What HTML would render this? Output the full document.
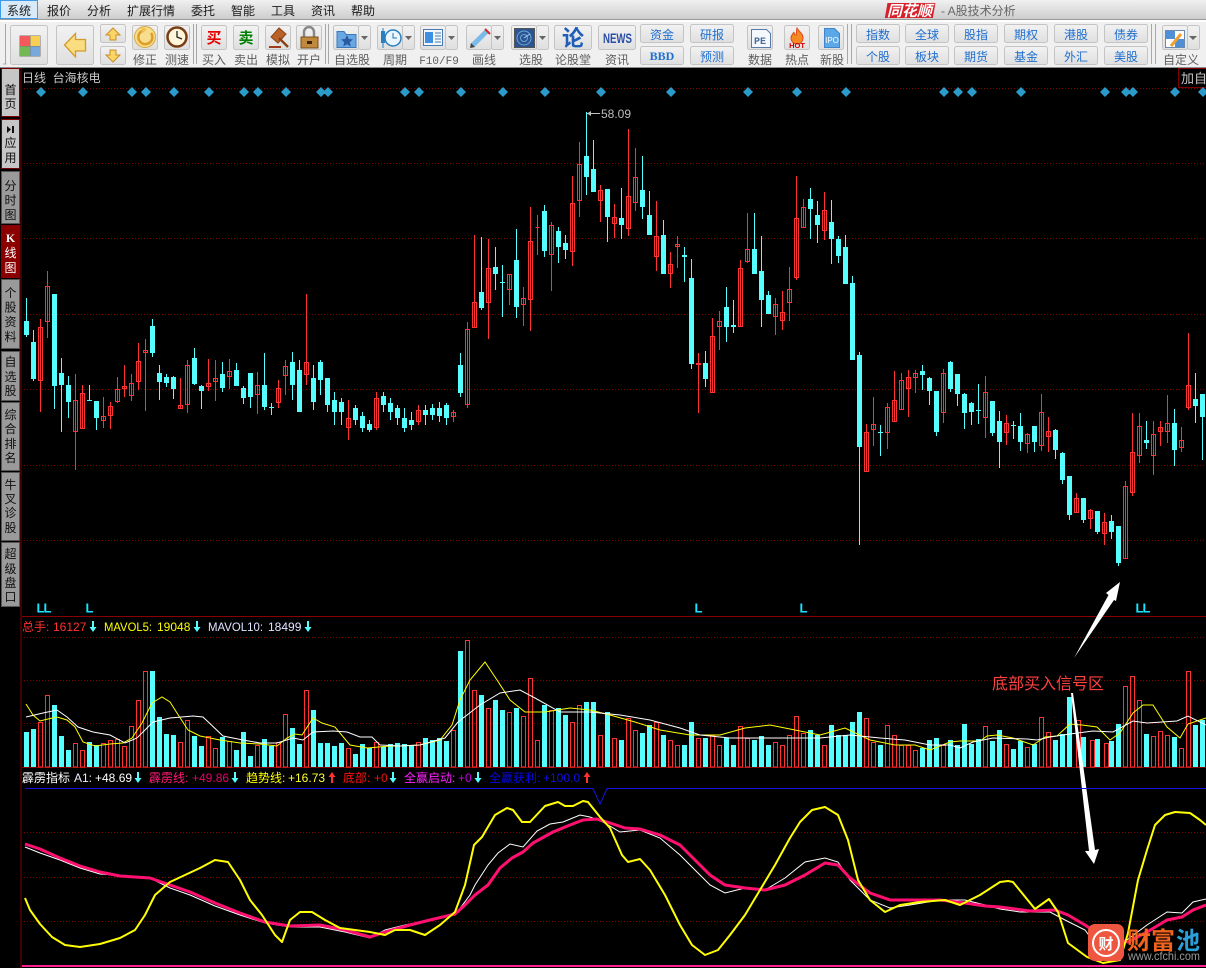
<!DOCTYPE html>
<html lang="zh"><head><meta charset="utf-8"><title>台海核电 日线</title>
<style>
html,body{margin:0;padding:0;background:#000;width:1206px;height:968px;overflow:hidden}
svg{display:block;font-family:"Liberation Sans","Noto Sans CJK SC",sans-serif;font-size:12px}
.b{fill:url(#bg);stroke:#c4c4c4}
.l{fill:#5e5e5e;text-anchor:middle}
.q{fill:#1f6fcf;text-anchor:middle}
.t{fill:#111;text-anchor:middle}
.g{stroke:#7c0000;stroke-dasharray:1 2;fill:none}
.s{fill:none;shape-rendering:crispEdges}
.sep{stroke:#a8a8a8;fill:none}
</style></head><body>
<svg width="1206" height="968" viewBox="0 0 1206 968" xmlns="http://www.w3.org/2000/svg">
<defs>
<linearGradient id="mb" x1="0" y1="0" x2="0" y2="1"><stop offset="0" stop-color="#f1f1f1"/><stop offset="1" stop-color="#cdcdcd"/></linearGradient>
<linearGradient id="bg" x1="0" y1="0" x2="0" y2="1"><stop offset="0" stop-color="#f2f2f2"/><stop offset="1" stop-color="#dfdfdf"/></linearGradient>
<path id="dn" d="M-1 0h2v6h2.500L0 11-3.500 6H-1z"/>
<path id="up" d="M-1 11h2V5h2.500L0 0-3.500 5H-1z"/>
</defs>
<rect width="1206" height="968" fill="#000"/>
<!-- menu -->
<rect width="1206" height="19" fill="url(#mb)"/>
<rect y="19" width="1206" height="1" fill="#9a9a9a"/>
<rect y="20" width="1206" height="2" fill="#fff"/>
<rect y="22" width="1206" height="45" fill="#f0f0f0"/>
<rect y="67" width="1206" height="1" fill="#8c8c8c"/>
<rect x=".5" y=".5" width="37" height="18" fill="#d8e9f8" stroke="#3d9be9"/>
<g fill="#1a1a1a">
<text x="7" y="15">系统</text><text x="47" y="15">报价</text><text x="87" y="15">分析</text><text x="127" y="15">扩展行情</text><text x="191" y="15">委托</text><text x="231" y="15">智能</text><text x="271" y="15">工具</text><text x="311" y="15">资讯</text><text x="351" y="15">帮助</text>
</g>
<g transform="skewX(-10)"><rect x="888" y="3" width="48" height="15" fill="#d8202a"/></g>
<text x="887" y="16" fill="#fff" font-weight="700" font-style="italic" font-size="15">同花顺</text>
<text x="941" y="15" fill="#666">- A股技术分析</text>
<!-- separators -->
<path class="sep" d="M5.500 24V64M6.500 64H3M193.500 24V64M196.500 24V64M325.500 24V64M328.500 24V64M847.500 24V64M851.500 24V64M1151.500 24V64M1155.500 24V64"/>
<!-- buttons -->
<rect class="b" x="10.500" y="25.500" width="37" height="39" rx="2"/>
<rect class="b" x="56.500" y="25.500" width="37" height="39" rx="2"/>
<rect class="b" x="100.500" y="24.500" width="25" height="18" rx="2"/>
<rect class="b" x="100.500" y="46.500" width="25" height="18" rx="2"/>
<rect class="b" x="132.500" y="25.500" width="25" height="24" rx="2"/>
<rect class="b" x="164.500" y="25.500" width="25" height="24" rx="2"/>
<rect class="b" x="201.500" y="25.500" width="25" height="24" rx="2"/>
<rect class="b" x="233.500" y="25.500" width="25" height="24" rx="2"/>
<rect class="b" x="265.500" y="25.500" width="25" height="24" rx="2"/>
<rect class="b" x="296.500" y="25.500" width="25" height="24" rx="2"/>
<rect class="b" x="333.500" y="25.500" width="25" height="24" rx="2"/><rect class="b" x="358.500" y="25.500" width="12" height="24" rx="2"/>
<rect class="b" x="377.500" y="25.500" width="25" height="24" rx="2"/><rect class="b" x="402.500" y="25.500" width="12" height="24" rx="2"/>
<rect class="b" x="420.500" y="25.500" width="25" height="24" rx="2"/><rect class="b" x="445.500" y="25.500" width="12" height="24" rx="2"/>
<rect class="b" x="466.500" y="25.500" width="25" height="24" rx="2"/><rect class="b" x="491.500" y="25.500" width="12" height="24" rx="2"/>
<rect class="b" x="511.500" y="25.500" width="25" height="24" rx="2"/><rect class="b" x="536.500" y="25.500" width="12" height="24" rx="2"/>
<rect class="b" x="554.500" y="25.500" width="37" height="24" rx="2"/>
<rect class="b" x="598.500" y="25.500" width="37" height="24" rx="2"/>
<rect class="b" x="640.500" y="24.500" width="43" height="18" rx="2"/><rect class="b" x="640.500" y="46.500" width="43" height="18" rx="2"/>
<rect class="b" x="690.500" y="24.500" width="43" height="18" rx="2"/><rect class="b" x="690.500" y="46.500" width="43" height="18" rx="2"/>
<rect class="b" x="747.500" y="25.500" width="25" height="24" rx="2"/>
<rect class="b" x="784.500" y="25.500" width="25" height="24" rx="2"/>
<rect class="b" x="818.500" y="25.500" width="25" height="24" rx="2"/>
<rect class="b" x="856.500" y="24.500" width="43" height="18" rx="2"/><rect class="b" x="856.500" y="46.500" width="43" height="18" rx="2"/>
<rect class="b" x="905.500" y="24.500" width="43" height="18" rx="2"/><rect class="b" x="905.500" y="46.500" width="43" height="18" rx="2"/>
<rect class="b" x="954.500" y="24.500" width="43" height="18" rx="2"/><rect class="b" x="954.500" y="46.500" width="43" height="18" rx="2"/>
<rect class="b" x="1004.500" y="24.500" width="43" height="18" rx="2"/><rect class="b" x="1004.500" y="46.500" width="43" height="18" rx="2"/>
<rect class="b" x="1054.500" y="24.500" width="43" height="18" rx="2"/><rect class="b" x="1054.500" y="46.500" width="43" height="18" rx="2"/>
<rect class="b" x="1104.500" y="24.500" width="43" height="18" rx="2"/><rect class="b" x="1104.500" y="46.500" width="43" height="18" rx="2"/>
<rect class="b" x="1162.500" y="25.500" width="25" height="24" rx="2"/><rect class="b" x="1187.500" y="25.500" width="12" height="24" rx="2"/>
<!-- dropdown triangles -->
<path fill="#666" d="M361 36h7l-3.500 4zM405 36h7l-3.500 4zM448 36h7l-3.500 4zM494 36h7l-3.500 4zM539 36h7l-3.500 4zM1189 36h8l-4 4z"/>
<!-- icons -->
<rect x="19.500" y="35.500" width="21" height="21" fill="#777"/>
<rect x="20" y="36" width="10" height="10" fill="#f45a5c"/><rect x="30.500" y="36" width="9.500" height="10" fill="#f8cf52"/><rect x="20" y="46.500" width="10" height="9.500" fill="#73b854"/><rect x="30.500" y="46.500" width="9.500" height="9.500" fill="#79a9dc"/>
<path d="M64.500 45L75.500 33.500V39.500H85.500V51H75.500V57z" fill="#f9dd80" stroke="#d49a2c" stroke-width="1.300"/>
<path d="M113 28l7 7h-4v5h-6v-5h-4z" fill="#fbd666" stroke="#c98f26"/>
<path d="M113 62l7-7h-4v-5h-6v5h-4z" fill="#fbd666" stroke="#c98f26"/>
<circle cx="145" cy="37" r="10.500" fill="#f8dd8c" stroke="#d5a840"/>
<path d="M151 33a7 7 0 1 1-9-2" fill="none" stroke="#dd9d2a" stroke-width="2.500"/><path d="M141 27l6 2-4 4z" fill="#f2c050"/>
<circle cx="177" cy="37" r="9.500" fill="#fff6dc" stroke="#7a3c12" stroke-width="2.500"/><path d="M177 31v6l5 2" fill="none" stroke="#222" stroke-width="1.300"/>
<text x="214" y="43" fill="#e80000" font-weight="700" font-size="15" text-anchor="middle">买</text>
<text x="246" y="43" fill="#008000" font-weight="700" font-size="15" text-anchor="middle">卖</text>
<path d="M271 37l8-9 7 6-8 9z" fill="#b8622a" stroke="#8a4316"/><path d="M279 38l9 9" stroke="#8a4316" stroke-width="2.500"/>
<rect x="269" y="46" width="12" height="2" fill="#a03c1a"/>
<path d="M304 37v-5a5 5 0 0 1 10 0v5" fill="none" stroke="#888" stroke-width="2.500"/>
<rect x="301" y="37" width="17" height="11" fill="#c08a3c" stroke="#7a4e1c"/><rect x="307" y="41" width="5" height="3" fill="#3b2208"/>
<path d="M337 31.500h7l2 3h10v13h-19z" fill="#69a7e4" stroke="#3a78b8"/><path d="M347 35l1.800 4 4.200.4-3.200 2.800 1 4.300-3.800-2.300-3.800 2.300 1-4.300-3.200-2.800 4.200-.4z" fill="#2a5aa0"/>
<rect x="381" y="31" width="4" height="12" fill="#2a7fc0"/><path d="M383 28v20" stroke="#2a7fc0"/><circle cx="393" cy="38" r="8" fill="#eaf5fd" stroke="#2a7fc0" stroke-width="1.500"/><path d="M393 33v5h4" fill="none" stroke="#2a6fa8"/>
<rect x="423.500" y="29.500" width="19" height="16" fill="#f2f7fc" stroke="#4a7ab0"/><rect x="425" y="32" width="8" height="11" fill="#3d8fe0"/><path d="M435 33h6M435 36h6M435 39h6M435 42h6" stroke="#4a7ab0"/>
<path d="M472 46l15-15" stroke="#7cbbe8" stroke-width="5"/><path d="M485 29l5 5" stroke="#d02a2a" stroke-width="2"/><path d="M470 48l1-5 4 4z" fill="#444"/>
<rect x="514.500" y="28.500" width="20" height="19" fill="#2a5590" stroke="#555"/><circle cx="524" cy="38" r="7" fill="none" stroke="#6fa4d8"/><circle cx="524" cy="38" r="3.500" fill="none" stroke="#6fa4d8"/><path d="M524 38l6-4" stroke="#a8d0f0"/>
<text x="573" y="46" fill="#1f5fb8" font-weight="700" font-size="22" text-anchor="middle">论</text>
<text x="603" y="43" fill="#2a4fa8" font-weight="700" font-size="14" textLength="29" lengthAdjust="spacingAndGlyphs">NEWS</text>
<path d="M751.500 29.500h15l4 4v14h-19z" fill="#f4f8fc" stroke="#5a7aa8"/><text x="760" y="44" fill="#4a6a9a" font-weight="700" font-size="10" text-anchor="middle" style="font-family:'Liberation Mono',monospace">PE</text>
<path d="M797 28c2 4 6 5 6 10a6 6 0 0 1-12 0c0-3 2-4 3-6 0 2 1 3 2 3 1-2 0-4 1-7z" fill="#f58a24" stroke="#e04a1a"/><text x="797" y="48" fill="#c00" font-weight="700" font-size="7.500" text-anchor="middle">HOT</text>
<path d="M824.500 28.500h10l5 5v14h-15z" fill="#5aa8e8" stroke="#3f86c8"/><text x="832" y="43" fill="#fff" font-size="8" text-anchor="middle">IPO</text>
<rect x="1165.500" y="30.500" width="19" height="17" fill="#fff" stroke="#6a8ab0"/><rect x="1166" y="31" width="9" height="8" fill="#4f8fd8"/><rect x="1175" y="39" width="9" height="8" fill="#4f8fd8"/><path d="M1171 46l10-12" stroke="#f0a030" stroke-width="3"/>
<!-- labels -->
<g class="l">
<text x="145" y="64">修正</text><text x="177" y="64">测速</text><text x="214" y="64">买入</text><text x="246" y="64">卖出</text><text x="278" y="64">模拟</text><text x="309" y="64">开户</text><text x="352" y="64">自选股</text><text x="395" y="64">周期</text>
<text x="439" y="64" style="font-family:'Liberation Mono',monospace;font-size:11px">F10/F9</text>
<text x="484" y="64">画线</text><text x="531" y="64">选股</text><text x="573" y="64">论股堂</text><text x="617" y="64">资讯</text><text x="760" y="64">数据</text><text x="797" y="64">热点</text><text x="832" y="64">新股</text><text x="1181" y="64">自定义</text>
</g>
<g class="q">
<text x="662" y="39">资金</text><text x="662" y="60" font-weight="700" style="font-family:'Liberation Serif',serif">BBD</text><text x="712" y="39">研报</text><text x="712" y="61">预测</text>
<text x="878" y="39">指数</text><text x="878" y="61">个股</text><text x="927" y="39">全球</text><text x="927" y="61">板块</text><text x="976" y="39">股指</text><text x="976" y="61">期货</text><text x="1026" y="39">期权</text><text x="1026" y="61">基金</text><text x="1076" y="39">港股</text><text x="1076" y="61">外汇</text><text x="1126" y="39">债券</text><text x="1126" y="61">美股</text>
</g>
<!-- left tabs -->
<path d="M21 68V968" stroke="#7c0000"/>
<g stroke="#7c0000"><rect x="1.500" y="68.500" width="18" height="48" fill="#c6c6c6"/><rect x="1.500" y="119.500" width="18" height="49" fill="#c6c6c6"/></g>
<g fill="#9a9a9a" stroke="#555"><rect x="1.500" y="171.500" width="18" height="52"/><rect x="1.500" y="279.500" width="18" height="69"/><rect x="1.500" y="351.500" width="18" height="49"/><rect x="1.500" y="402.500" width="18" height="68"/><rect x="1.500" y="472.500" width="18" height="68"/><rect x="1.500" y="542.500" width="18" height="64"/></g>
<rect x="1" y="225" width="19" height="53" fill="#8a0000"/>
<g class="t">
<text x="10.500" y="94">首</text><text x="10.500" y="108">页</text>
<path d="M7 126l4 3.500-4 3.500zM12 126h2v7h-2z" fill="#111"/>
<text x="10.500" y="147">应</text><text x="10.500" y="162">用</text>
<text x="10.500" y="190">分</text><text x="10.500" y="204.500">时</text><text x="10.500" y="219">图</text>
<text x="10.500" y="297">个</text><text x="10.500" y="311.500">股</text><text x="10.500" y="326">资</text><text x="10.500" y="341">料</text>
<text x="10.500" y="366">自</text><text x="10.500" y="381">选</text><text x="10.500" y="395">股</text>
<text x="10.500" y="419">综</text><text x="10.500" y="433">合</text><text x="10.500" y="448">排</text><text x="10.500" y="462">名</text>
<text x="10.500" y="489">牛</text><text x="10.500" y="503">叉</text><text x="10.500" y="517">诊</text><text x="10.500" y="532">股</text>
<text x="10.500" y="558">超</text><text x="10.500" y="573">级</text><text x="10.500" y="587">盘</text><text x="10.500" y="601">口</text>
</g>
<g fill="#fff" text-anchor="middle"><text x="10.500" y="242" font-weight="700" style="font-family:'Liberation Serif',serif">K</text><text x="10.500" y="257">线</text><text x="10.500" y="272">图</text></g>
<!-- grid -->
<path class="g" d="M24 88.500H1206M24 163.500H1206M24 238.500H1206M24 314.500H1206M24 389.500H1206M24 465.500H1206M24 540.500H1206M24 637.500H1206M24 680.500H1206M24 723.500H1206M24 832.500H1206M24 877.500H1206M24 921.500H1206"/>
<path d="M22 616.500H1206M22 767.500H1206" stroke="#8a0000"/>
<text x="22" y="82" fill="#c8c8c8">日线&#160;&#160;台海核电</text>
<rect x="1178.500" y="68.500" width="40" height="19" fill="#000" stroke="#7c0000"/>
<text x="1181" y="83" fill="#c8c8c8" font-size="13">加自定义</text>
<!-- diamonds -->
<g fill="#2b9bc9"><path d="M41 87l5 5-5 5-5-5zM83 87l5 5-5 5-5-5zM132 87l5 5-5 5-5-5zM146 87l5 5-5 5-5-5zM174 87l5 5-5 5-5-5zM209 87l5 5-5 5-5-5zM244 87l5 5-5 5-5-5zM258 87l5 5-5 5-5-5zM286 87l5 5-5 5-5-5zM321 87l5 5-5 5-5-5zM328 87l5 5-5 5-5-5zM405 87l5 5-5 5-5-5zM419 87l5 5-5 5-5-5zM461 87l5 5-5 5-5-5zM503 87l5 5-5 5-5-5zM545 87l5 5-5 5-5-5zM601 87l5 5-5 5-5-5zM671 87l5 5-5 5-5-5zM748 87l5 5-5 5-5-5zM797 87l5 5-5 5-5-5zM846 87l5 5-5 5-5-5zM944 87l5 5-5 5-5-5zM958 87l5 5-5 5-5-5zM972 87l5 5-5 5-5-5zM1021 87l5 5-5 5-5-5zM1105 87l5 5-5 5-5-5zM1126 87l5 5-5 5-5-5zM1133 87l5 5-5 5-5-5zM1175 87l5 5-5 5-5-5zM1203 87l5 5-5 5-5-5z"/></g>
<!-- cyan wicks -->
<path class="s" stroke="#55ffff" d="M26.500 298V337M33.500 330V381M54.500 294V409M61.500 358V432M68.500 376V418M89.500 385V400M96.500 401V430M152.500 319V357M159.500 365V400M166.500 374V387M173.500 376V399M194.500 348V385M201.500 385V409M222.500 362V392M236.500 363V386M243.500 386V404M250.500 373V408M264.500 353V410M271.500 403V415M292.500 352V400M299.500 360V412M313.500 365V410M320.500 360V395M327.500 378V412M334.500 392V425M341.500 398V425M355.500 405V425M362.500 412V432M369.500 420V432M383.500 392V412M390.500 398V420M397.500 405V425M404.500 408V432M411.500 412V430M425.500 405V425M432.500 404V420M439.500 402V422M446.500 403V425M460.500 353V397M481.500 237V310M495.500 247V290M502.500 265V317M516.500 229V318M544.500 205V257M558.500 227V263M565.500 235V259M586.500 112V195M593.500 140V192M607.500 189V242M621.500 188V239M642.500 156V219M649.500 191V235M663.500 220V274M684.500 247V282M691.500 259V369M705.500 351V387M726.500 287V342M733.500 300V333M754.500 213V274M761.500 236V327M768.500 291V314M810.500 188V239M817.500 201V243M831.500 200V264M838.500 236V263M845.500 235V284M852.500 276V360M859.500 352V545M880.500 425V456M922.500 365V390M929.500 377V405M936.500 391V436M950.500 361V392M957.500 374V406M964.500 393V429M971.500 402V425M978.500 384V424M992.500 401V436M999.500 411V468M1013.500 421V439M1020.500 413V451M1034.500 426V452M1055.500 429V459M1062.500 452V484M1069.500 476V520M1083.500 498V523M1097.500 511V534M1111.500 515V539M1118.500 526V566M1146.500 421V449M1174.500 409V466M1195.500 373V423M1202.500 394V460"/>
<!-- cyan bodies -->
<path class="s" stroke="#55ffff" stroke-width="5" d="M26.500 321V335M33.500 342V379M54.500 294V386M61.500 373V385M68.500 385V402M89.500 400V401M96.500 401V418M152.500 326V353M159.500 373V382M166.500 377V383M173.500 377V389M194.500 358V384M201.500 386V391M222.500 374V388M236.500 370V386M243.500 388V398M250.500 373V397M264.500 385V407M271.500 407V408M292.500 362V385M299.500 370V412M313.500 378V402M320.500 362V380M327.500 378V405M334.500 400V412M341.500 402V412M355.500 408V420M362.500 416V428M369.500 424V430M383.500 396V405M390.500 403V412M397.500 408V418M404.500 418V428M411.500 420V425M425.500 410V415M432.500 408V415M439.500 408V416M446.500 405V418M460.500 365V393M481.500 292V308M495.500 267V274M502.500 282V283M516.500 260V307M544.500 211V251M558.500 231V247M565.500 243V250M586.500 156V177M593.500 169V192M607.500 189V217M621.500 218V225M642.500 190V207M649.500 215V235M663.500 235V274M684.500 255V257M691.500 278V364M705.500 363V379M726.500 307V327M733.500 325V327M754.500 249V274M761.500 271V300M768.500 295V314M810.500 199V209M817.500 215V225M831.500 222V239M838.500 239V256M845.500 247V284M852.500 283V360M859.500 355V447M880.500 432V433M922.500 371V375M929.500 378V391M936.500 391V432M950.500 362V389M957.500 374V394M964.500 394V413M971.500 403V412M978.500 410V411M992.500 401V433M999.500 421V442M1013.500 425V426M1020.500 426V442M1034.500 426V442M1055.500 430V450M1062.500 453V480M1069.500 476V515M1083.500 498V520M1097.500 511V532M1111.500 521V532M1118.500 526V563M1146.500 440V443M1174.500 423V450M1195.500 399V406M1202.500 394V417"/>
<!-- red wicks -->
<path class="s" stroke="#ff3232" d="M40.500 319V412M47.500 271V338M75.500 374V470M82.500 385V429M103.500 397V428M110.500 402V429M117.500 377V403M124.500 365V397M131.500 374V401M138.500 343V390M145.500 339V411M180.500 378V409M187.500 360V413M208.500 359V391M215.500 360V401M229.500 359V389M257.500 372V414M278.500 380V408M285.500 360V395M306.500 294V385M348.500 400V440M376.500 392V430M418.500 405V425M453.500 410V422M467.500 322V408M474.500 235V328M488.500 239V339M509.500 274V305M523.500 287V326M530.500 207V331M537.500 215V255M551.500 222V291M572.500 176V266M579.500 142V217M600.500 185V222M614.500 204V238M628.500 129V236M635.500 148V211M656.500 201V271M670.500 252V288M677.500 236V268M698.500 353V413M712.500 318V393M719.500 311V350M740.500 260V327M747.500 213V263M775.500 298V335M782.500 291V330M789.500 267V321M796.500 176V280M803.500 199V228M824.500 192V240M866.500 424V472M873.500 397V446M887.500 403V449M894.500 371V422M901.500 373V410M908.500 370V417M915.500 370V393M943.500 369V423M985.500 376V438M1006.500 415V445M1027.500 433V453M1041.500 394V451M1048.500 417V452M1076.500 493V513M1090.500 509V529M1104.500 513V545M1125.500 481V559M1132.500 413V496M1139.500 413V463M1153.500 421V475M1160.500 421V446M1167.500 395V443M1181.500 427V452M1188.500 333V410"/>
<!-- red bodies -->
<path class="s" stroke="#ff3232" fill="#000" d="M38.500 327.500h4V380.500h-4zM45.500 286.500h4V321.500h-4zM73.500 400.500h4V431.500h-4zM80.500 393.500h4V428.500h-4zM101.500 416.500h4V420.500h-4zM108.500 406.500h4V415.500h-4zM115.500 389.500h4V401.500h-4zM122.500 386.500h4V388.500h-4zM129.500 383.500h4V395.500h-4zM136.500 361.500h4V381.500h-4zM143.500 350.500h4V352.500h-4zM178.500 405.500h4V408.500h-4zM185.500 365.500h4V404.500h-4zM206.500 383.500h4V386.500h-4zM213.500 378.500h4V381.500h-4zM227.500 371.500h4V376.500h-4zM255.500 385.500h4V394.500h-4zM276.500 388.500h4V402.500h-4zM283.500 366.500h4V375.500h-4zM304.500 362.500h4V374.500h-4zM346.500 418.500h4V427.500h-4zM374.500 398.500h4V427.500h-4zM416.500 410.500h4V421.500h-4zM451.500 412.500h4V416.500h-4zM465.500 329.500h4V404.500h-4zM472.500 302.500h4V327.500h-4zM486.500 268.500h4V302.500h-4zM507.500 274.500h4V289.500h-4zM521.500 298.500h4V304.500h-4zM528.500 241.500h4V299.500h-4zM535.500 227.500h4V227.500h-4zM549.500 225.500h4V254.500h-4zM570.500 203.500h4V251.500h-4zM577.500 164.500h4V200.500h-4zM598.500 190.500h4V200.500h-4zM612.500 217.500h4V223.500h-4zM626.500 196.500h4V228.500h-4zM633.500 177.500h4V202.500h-4zM654.500 236.500h4V256.500h-4zM668.500 264.500h4V273.500h-4zM675.500 244.500h4V246.500h-4zM696.500 363.500h4V364.500h-4zM710.500 336.500h4V392.500h-4zM717.500 321.500h4V326.500h-4zM738.500 268.500h4V326.500h-4zM745.500 249.500h4V261.500h-4zM773.500 304.500h4V316.500h-4zM780.500 312.500h4V320.500h-4zM787.500 289.500h4V302.500h-4zM794.500 218.500h4V277.500h-4zM801.500 207.500h4V227.500h-4zM822.500 210.500h4V230.500h-4zM864.500 432.500h4V471.500h-4zM871.500 424.500h4V429.500h-4zM885.500 407.500h4V432.500h-4zM892.500 400.500h4V421.500h-4zM899.500 380.500h4V409.500h-4zM906.500 377.500h4V388.500h-4zM913.500 373.500h4V377.500h-4zM941.500 373.500h4V412.500h-4zM983.500 392.500h4V417.500h-4zM1004.500 423.500h4V432.500h-4zM1025.500 434.500h4V443.500h-4zM1039.500 412.500h4V445.500h-4zM1046.500 431.500h4V436.500h-4zM1074.500 498.500h4V512.500h-4zM1088.500 510.500h4V518.500h-4zM1102.500 522.500h4V533.500h-4zM1123.500 486.500h4V558.500h-4zM1130.500 452.500h4V492.500h-4zM1137.500 426.500h4V455.500h-4zM1151.500 434.500h4V455.500h-4zM1158.500 427.500h4V431.500h-4zM1165.500 423.500h4V431.500h-4zM1179.500 440.500h4V447.500h-4zM1186.500 385.500h4V407.500h-4z"/>
<!-- high label -->
<path d="M587 113.500H600" stroke="#c0c0c0"/><path d="M587 113.500l4-2.500v5z" fill="#c0c0c0"/>
<text x="601" y="118" fill="#bdbdbd">58.09</text>
<!-- L marks -->
<g fill="#19e4ff" font-size="13" font-weight="700"><text x="36.500" y="612.500" letter-spacing="-1">LL</text><text x="85.500" y="612.500">L</text><text x="694.500" y="612.500">L</text><text x="799.500" y="612.500">L</text><text x="1135.500" y="612.500" letter-spacing="-1">LL</text></g>
<!-- volume header -->
<text x="22" y="631" fill="#ff3232">总手:</text><text x="53" y="631" fill="#ff3232">16127</text><use href="#dn" x="93" y="621" fill="#55ffff"/>
<text x="104" y="631" fill="#ffff00" textLength="48" lengthAdjust="spacingAndGlyphs">MAVOL5:</text><text x="157" y="631" fill="#ffff00">19048</text><use href="#dn" x="197" y="621" fill="#55ffff"/>
<text x="208" y="631" fill="#e0e4ff" textLength="55" lengthAdjust="spacingAndGlyphs">MAVOL10:</text><text x="268" y="631" fill="#e0e4ff">18499</text><use href="#dn" x="308" y="621" fill="#55ffff"/>
<!-- volume cyan -->
<path class="s" stroke="#55ffff" stroke-width="5" d="M26.500 732V767M33.500 729V767M54.500 705V767M61.500 736V767M68.500 750V767M89.500 742V767M96.500 745V767M152.500 671V767M159.500 717V767M166.500 734V767M173.500 735V767M194.500 736V767M201.500 746V767M222.500 737V767M236.500 750V767M243.500 732V767M250.500 756V767M264.500 739V767M271.500 746V767M292.500 728V767M299.500 744V767M313.500 710V767M320.500 743V767M327.500 743V767M334.500 746V767M341.500 743V767M355.500 754V767M362.500 744V767M369.500 748V767M383.500 747V767M390.500 744V767M397.500 743V767M404.500 744V767M411.500 746V767M425.500 738V767M432.500 740V767M439.500 738V767M446.500 741V767M460.500 651V767M481.500 695V767M495.500 700V767M502.500 710V767M516.500 708V767M544.500 705V767M558.500 708V767M565.500 715V767M586.500 702V767M593.500 702V767M607.500 712V767M621.500 740V767M642.500 733V767M649.500 725V767M663.500 735V767M684.500 745V767M691.500 722V767M705.500 738V767M726.500 738V767M733.500 745V767M754.500 740V767M761.500 736V767M768.500 745V767M810.500 730V767M817.500 735V767M831.500 725V767M838.500 735V767M845.500 735V767M852.500 722V767M859.500 712V767M880.500 745V767M922.500 748V767M929.500 740V767M936.500 738V767M950.500 740V767M957.500 745V767M964.500 724V767M971.500 744V767M978.500 739V767M992.500 741V767M999.500 730V767M1013.500 749V767M1020.500 741V767M1034.500 744V767M1055.500 740V767M1062.500 734V767M1069.500 697V767M1083.500 737V767M1097.500 739V767M1111.500 741V767M1118.500 724V767M1146.500 734V767M1174.500 737V767M1195.500 725V767M1202.500 720V767"/>
<!-- volume red -->
<path class="s" stroke="#ff3232" fill="#000" d="M38.500 722.500h4V767h-4zM45.500 695.500h4V767h-4zM73.500 743.500h4V767h-4zM80.500 750.500h4V767h-4zM101.500 743.500h4V767h-4zM108.500 740.500h4V767h-4zM115.500 739.500h4V767h-4zM122.500 746.500h4V767h-4zM129.500 726.500h4V767h-4zM136.500 700.500h4V767h-4zM143.500 671.500h4V767h-4zM178.500 742.500h4V767h-4zM185.500 720.500h4V767h-4zM206.500 736.500h4V767h-4zM213.500 748.500h4V767h-4zM227.500 741.500h4V767h-4zM255.500 745.500h4V767h-4zM276.500 742.500h4V767h-4zM283.500 714.500h4V767h-4zM304.500 690.500h4V767h-4zM346.500 748.500h4V767h-4zM374.500 742.500h4V767h-4zM416.500 742.500h4V767h-4zM451.500 730.500h4V767h-4zM465.500 640.500h4V767h-4zM472.500 690.500h4V767h-4zM486.500 708.500h4V767h-4zM507.500 712.500h4V767h-4zM521.500 716.500h4V767h-4zM528.500 678.500h4V767h-4zM535.500 740.500h4V767h-4zM549.500 710.500h4V767h-4zM570.500 722.500h4V767h-4zM577.500 705.500h4V767h-4zM598.500 735.500h4V767h-4zM612.500 738.500h4V767h-4zM626.500 718.500h4V767h-4zM633.500 730.500h4V767h-4zM654.500 722.500h4V767h-4zM668.500 740.500h4V767h-4zM675.500 745.500h4V767h-4zM696.500 738.500h4V767h-4zM710.500 735.500h4V767h-4zM717.500 745.500h4V767h-4zM738.500 726.500h4V767h-4zM745.500 738.500h4V767h-4zM773.500 742.500h4V767h-4zM780.500 745.500h4V767h-4zM787.500 735.500h4V767h-4zM794.500 716.500h4V767h-4zM801.500 733.500h4V767h-4zM822.500 745.500h4V767h-4zM864.500 718.500h4V767h-4zM871.500 742.500h4V767h-4zM885.500 725.500h4V767h-4zM892.500 735.500h4V767h-4zM899.500 745.500h4V767h-4zM906.500 745.500h4V767h-4zM913.500 750.500h4V767h-4zM941.500 745.500h4V767h-4zM983.500 726.500h4V767h-4zM1004.500 744.500h4V767h-4zM1025.500 747.500h4V767h-4zM1039.500 717.500h4V767h-4zM1046.500 732.500h4V767h-4zM1076.500 720.500h4V767h-4zM1090.500 740.500h4V767h-4zM1104.500 743.500h4V767h-4zM1123.500 686.500h4V767h-4zM1130.500 676.500h4V767h-4zM1137.500 700.500h4V767h-4zM1151.500 736.500h4V767h-4zM1158.500 731.500h4V767h-4zM1165.500 735.500h4V767h-4zM1179.500 748.500h4V767h-4zM1186.500 671.500h4V767h-4z"/>
<!-- MA lines -->
<polyline fill="none" stroke="#ffff00" points="26,704 33,715 40,721 48,719 57,717 67,720 75,727 83,742 95,746 110,744 123,743 132,738 142,723 152,703 162,697 170,702 177,713 188,730 200,736 220,740 240,743 260,744 277,746 287,738 295,734 302,735 313,718 322,723 335,727 350,745 367,748 390,746 400,746 420,745 440,740 452,725 460,700 470,680 485,662 497,680 510,700 525,712 545,712 570,708 590,710 610,715 635,722 660,730 690,735 720,735 745,728 770,725 795,730 820,735 845,728 870,740 895,745 915,745 930,750 950,742 960,741 980,741 987,736 997,735 1013,738 1033,745 1045,737 1057,736 1070,724 1082,725 1097,727 1110,740 1120,733 1133,713 1143,705 1153,705 1167,727 1180,738 1188,724 1206,718"/>
<polyline fill="none" stroke="#ffffff" points="26,717 43,713 57,710 67,717 78,727 93,732 110,735 125,743 137,738 153,722 170,718 193,716 203,717 223,736 243,740 260,743 277,743 293,738 303,740 313,732 333,731 347,732 360,737 372,737 380,745 400,746 420,745 445,738 458,722 480,705 500,693 520,690 535,698 560,712 590,712 620,715 650,720 680,728 700,735 730,738 760,738 790,738 820,738 850,735 880,738 905,740 930,745 950,745 960,748 973,742 993,738 1027,739 1037,740 1050,737 1070,734 1093,731 1113,732 1133,721 1147,723 1177,721 1188,716 1206,725"/>
<!-- annotation -->
<text x="992" y="689" fill="#ff4040" font-size="16">底部买入信号区</text>
<polygon points="1074,658 1108.500,595 1106,593 1120,582 1116,601 1114,600" fill="#fff"/>
<polygon points="1071,693 1073,693 1095,850 1099,849 1094,864 1085,851 1089,851" fill="#fff"/>
<!-- indicator header -->
<text x="22" y="782" fill="#fff">霹雳指标</text><text x="74" y="782" fill="#e8e8ff">A1:</text><text x="95" y="782" fill="#fff">+48.69</text><use href="#dn" x="138" y="772" fill="#55ffff"/>
<text x="149" y="782" fill="#ff1a78">霹雳线:</text><text x="192" y="782" fill="#e8006a">+49.86</text><use href="#dn" x="235" y="772" fill="#55ffff"/>
<text x="246" y="782" fill="#ffff00">趋势线:</text><text x="288" y="782" fill="#ffff30">+16.73</text><use href="#up" x="332" y="772" fill="#ff3232"/>
<text x="343" y="782" fill="#ff1010">底部:</text><text x="374" y="782" fill="#f01010">+0</text><use href="#dn" x="393" y="772" fill="#55ffff"/>
<text x="404" y="782" fill="#ff20ff">全赢启动:</text><text x="458" y="782" fill="#c000e0">+0</text><use href="#dn" x="478" y="772" fill="#55ffff"/>
<text x="489" y="782" fill="#0808e0">全赢获利:</text><text x="543" y="782" fill="#1010e0">+100.0</text><use href="#up" x="587" y="772" fill="#ff3232"/>
<path d="M25 788.500H593L600 804L607 788.500H1206" fill="none" stroke="#1414e0"/>
<!-- indicator lines -->
<polyline fill="none" stroke="#ffffff" points="25,847 40,853 60,860 80,868 100,874 130,876 150,878 170,888 190,895 215,906 240,915 265,923 290,927 320,927 345,932 370,938 385,930 405,925 430,920 455,915 470,895 475,885 488,865 498,853 510,844 523,847 537,831 550,824 563,822 580,815 590,817 603,822 620,832 640,830 660,838 680,855 695,870 710,885 725,893 745,888 765,890 785,878 805,862 825,858 838,862 850,880 870,900 890,908 910,905 940,900 965,900 985,905 1000,909 1020,912 1050,912 1065,920 1085,930 1100,950 1120,945 1147,925 1167,912 1182,913 1193,902 1206,899"/>
<polyline fill="none" stroke="#ff1070" stroke-width="3" stroke-linejoin="round" points="25,844 40,849 60,858 80,866 100,872 120,876 150,878 170,885 190,892 215,903 240,913 265,922 290,926 320,925 345,930 370,937 385,932 410,925 430,920 455,914 465,905 475,895 488,885 500,868 512,858 523,852 533,843 553,832 570,825 583,820 597,819 607,822 625,828 640,829 660,835 680,845 695,860 710,875 725,885 745,888 765,890 785,885 805,875 825,863 838,865 850,878 870,893 890,900 910,900 940,900 965,903 985,906 1000,907 1030,911 1055,910 1068,915 1085,925 1100,935 1128,942 1147,932 1167,920 1182,917 1193,910 1206,905"/>
<polyline fill="none" stroke="#ffff00" stroke-width="2" stroke-linejoin="round" points="25,898 30,910 40,924 52,937 65,945 80,947 100,944 120,938 135,930 145,915 155,895 170,882 185,875 200,868 215,860 228,862 240,880 250,900 262,915 275,935 282,942 290,920 300,912 312,912 325,920 340,928 355,930 370,932 385,935 395,930 410,930 425,935 440,925 455,912 465,885 474,845 482,837 495,815 507,808 513,810 522,822 530,822 545,806 558,802 565,806 573,806 583,801 588,802 600,817 610,828 622,855 628,862 640,859 650,870 665,895 680,925 692,945 705,955 718,950 730,935 745,915 760,890 775,865 790,838 800,822 812,810 825,807 838,815 848,840 858,880 870,900 885,912 900,905 920,902 945,900 960,905 980,895 1000,882 1008,881 1013,882 1035,909 1049,899 1058,912 1068,943 1087,957 1103,963 1120,960 1128,933 1138,880 1147,850 1155,825 1165,815 1175,812 1190,813 1200,820 1206,825"/>
<path d="M22 966H1206" stroke="#ff2090" stroke-width="2"/>
<!-- watermark -->
<rect x="1088" y="924" width="36" height="37" rx="7" fill="#ee5640"/>
<circle cx="1106" cy="943" r="13" fill="none" stroke="#fff" stroke-width="2"/>
<text x="1106" y="949" fill="#fff" font-weight="700" font-size="15" text-anchor="middle">财</text>
<text x="1127" y="949" fill="#f0641e" font-weight="700" font-size="24">财富</text>
<text x="1176" y="949" fill="#2b9fd8" font-weight="700" font-size="24">池</text>
<text x="1128" y="960" fill="#9a9a9a" font-size="12" textLength="72" lengthAdjust="spacingAndGlyphs">www.cfchi.com</text>
</svg>
</body></html>
